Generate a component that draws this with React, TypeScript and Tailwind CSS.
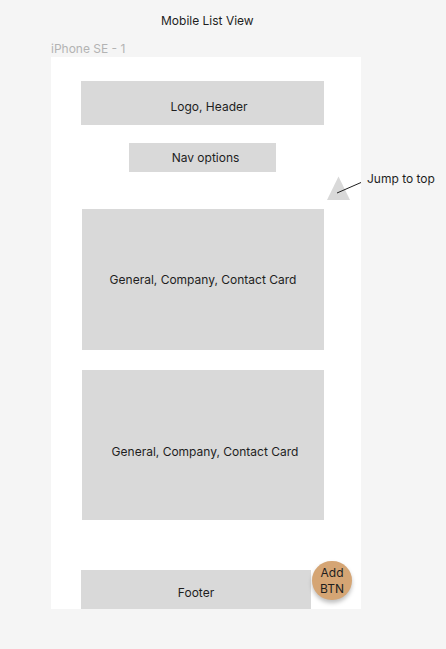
export default function App() {
  const box = "bg-[#d9d9d9] flex items-center justify-center text-[12px] text-[#1e1e1e]";

  return (
    <div
      className="relative w-[446px] h-[649px] bg-[#f5f5f5] overflow-hidden"
      style={{ fontFamily: "Inter, 'Noto Sans', sans-serif" }}
    >
      <div className="pt-[13px] h-[41px] pl-[161px] text-[12px] leading-[15px] text-[#1e1e1e]">Mobile List View</div>
      <div className="pl-[51px] h-[16px] text-[12px] leading-[15px] text-[#b3b3b3]">iPhone SE - 1</div>

      <div className="relative ml-[51px] w-[310px] h-[552px] bg-white flex flex-col items-start">
        <div className={`${box} mt-[24px] ml-[30px] w-[243px] h-[44px] pt-[8px] pl-[13px]`}>Logo, Header</div>
        <div className={`${box} mt-[18px] ml-[78px] w-[147px] h-[29px] pl-[6px]`}>Nav options</div>
        <div className={`${box} mt-[37px] ml-[31px] w-[242px] h-[141px] pt-[1px]`}>General, Company, Contact Card</div>
        <div className={`${box} mt-[20px] ml-[31px] w-[242px] h-[150px] pt-[14px] pl-[4px]`}>General, Company, Contact Card</div>
        <div className={`${box} mt-[50px] ml-[30px] w-[230px] h-[39px] pt-[6px]`}>Footer</div>

        {/* jump to top marker */}
        <svg className="absolute left-[276px] top-[119px]" width="24" height="25" viewBox="0 0 24 25">
          <polygon points="11.5,0.5 23,24 0,24" fill="#d9d9d9" />
        </svg>

        {/* floating add button */}
        <div className="absolute left-[261px] top-[504px] w-[40px] h-[39px] rounded-full bg-[#d5a574] shadow-[0_3px_4px_rgba(0,0,0,0.25)] flex flex-col items-center justify-center text-[12px] leading-[16px] text-[#1e1e1e]">
          <span>Add</span>
          <span>BTN</span>
        </div>
      </div>

      <svg className="absolute left-[336px] top-[181px]" width="26" height="13" viewBox="0 0 26 13">
        <line x1="1" y1="12" x2="25" y2="1.5" stroke="#1e1e1e" strokeWidth="1" />
      </svg>
      <div className="absolute left-[367px] top-[171px] text-[12px] leading-[15px] text-[#1e1e1e]">Jump to top</div>
    </div>
  );
}
